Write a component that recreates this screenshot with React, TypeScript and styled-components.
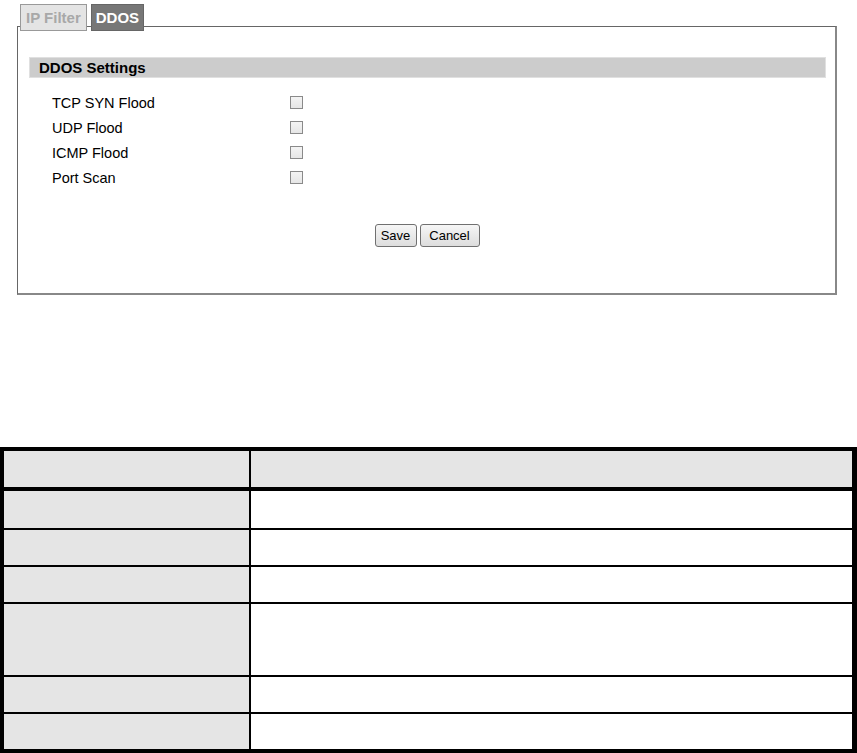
import React from 'react';
import styled, { createGlobalStyle } from 'styled-components';

const GlobalStyle = createGlobalStyle`
  html, body {
    margin: 0;
    padding: 0;
    background: #fff;
  }
  body {
    font-family: "Liberation Sans", Arial, sans-serif;
    color: #000;
  }
`;

const Page = styled.div`
  width: 857px;
  padding-top: 4px;
`;

const Section = styled.div`
  margin-left: 17px;
  width: 820px;
`;

const TabRow = styled.div`
  display: flex;
  gap: 4px;
  padding-left: 3px;
  margin-bottom: -5px;
  position: relative;
  z-index: 1;
`;

const Tab = styled.div<{ $active?: boolean }>`
  height: 27px;
  box-sizing: border-box;
  padding: 0 ${(p) => (p.$active ? '4px' : '5px')};
  display: flex;
  align-items: center;
  font-size: 15px;
  font-weight: bold;
  border: 1px solid ${(p) => (p.$active ? '#666' : '#999')};
  background: ${(p) => (p.$active ? '#777' : '#e4e4e4')};
  color: ${(p) => (p.$active ? '#fff' : '#a8a8a8')};
`;

const Panel = styled.div`
  box-sizing: border-box;
  height: 269px;
  border: 1px solid #666;
  border-right: 2px solid #888;
  border-bottom: 2px solid #888;
  padding: 30px 9px 0 11px;
`;

const HeaderBar = styled.div`
  height: 21px;
  background: #cccccc;
  border: 1px solid #e0e0e0;
  box-sizing: border-box;
  display: flex;
  align-items: center;
  padding-left: 9px;
  font-size: 15px;
  font-weight: bold;
`;

const Options = styled.div`
  margin-top: 12px;
  display: flex;
  flex-direction: column;
`;

const OptionRow = styled.label`
  display: grid;
  grid-template-columns: 238px 13px;
  align-items: center;
  height: 25px;
  padding-left: 23px;
  font-size: 14.5px;
`;

const Check = styled.span`
  width: 13px;
  height: 13px;
  box-sizing: border-box;
  border: 1px solid #8a8a8a;
  background: linear-gradient(#f4f4f4, #e6e6e6);
`;

const Actions = styled.div`
  margin-top: 34px;
  display: flex;
  justify-content: center;
  gap: 3px;
  padding-right: 1px;
`;

const Button = styled.button<{ $w: number }>`
  width: ${(p) => p.$w}px;
  height: 23px;
  padding: 0;
  font-family: "Liberation Sans", Arial, sans-serif;
  font-size: 13px;
  color: #000;
  border: 1px solid #707070;
  border-radius: 3px;
  background: linear-gradient(#f6f6f6, #dddddd);
`;

const Table = styled.table`
  margin-top: 152px;
  width: 857px;
  border-spacing: 0;
  border: 4px solid #000;
  border-right-width: 5px;
  border-bottom-width: 4px;
`;

const HeadCell = styled.th<{ $first?: boolean }>`
  height: 36px;
  padding: 0;
  box-sizing: content-box;
  background: #e5e5e5;
  border-bottom: 4px solid #000;
  border-right: ${(p) => (p.$first ? '2px solid #000' : 'none')};
  width: ${(p) => (p.$first ? '245px' : 'auto')};
`;

const Cell = styled.td<{ $first?: boolean; $last?: boolean; $h: number }>`
  height: ${(p) => p.$h}px;
  padding: 0;
  box-sizing: content-box;
  background: ${(p) => (p.$first ? '#e5e5e5' : '#fff')};
  border-right: ${(p) => (p.$first ? '2px solid #000' : 'none')};
  border-bottom: ${(p) => (p.$last ? 'none' : '2px solid #000')};
`;

const options = ['TCP SYN Flood', 'UDP Flood', 'ICMP Flood', 'Port Scan'];
const rowHeights = [37, 35, 35, 71, 35, 35];

const App = () => {
  return (
    <Page>
      <GlobalStyle />
      <Section>
        <TabRow>
          <Tab>IP Filter</Tab>
          <Tab $active>DDOS</Tab>
        </TabRow>
        <Panel>
          <HeaderBar>DDOS Settings</HeaderBar>
          <Options>
            {options.map((o) => (
              <OptionRow key={o}>
                <span>{o}</span>
                <Check />
              </OptionRow>
            ))}
          </Options>
          <Actions>
            <Button $w={42}>Save</Button>
            <Button $w={60}>Cancel</Button>
          </Actions>
        </Panel>
      </Section>
      <Table>
        <thead>
          <tr>
            <HeadCell $first />
            <HeadCell />
          </tr>
        </thead>
        <tbody>
          {rowHeights.map((h, i) => (
            <tr key={i}>
              <Cell $first $h={h} $last={i === rowHeights.length - 1} />
              <Cell $h={h} $last={i === rowHeights.length - 1} />
            </tr>
          ))}
        </tbody>
      </Table>
    </Page>
  );
};

export default App;
